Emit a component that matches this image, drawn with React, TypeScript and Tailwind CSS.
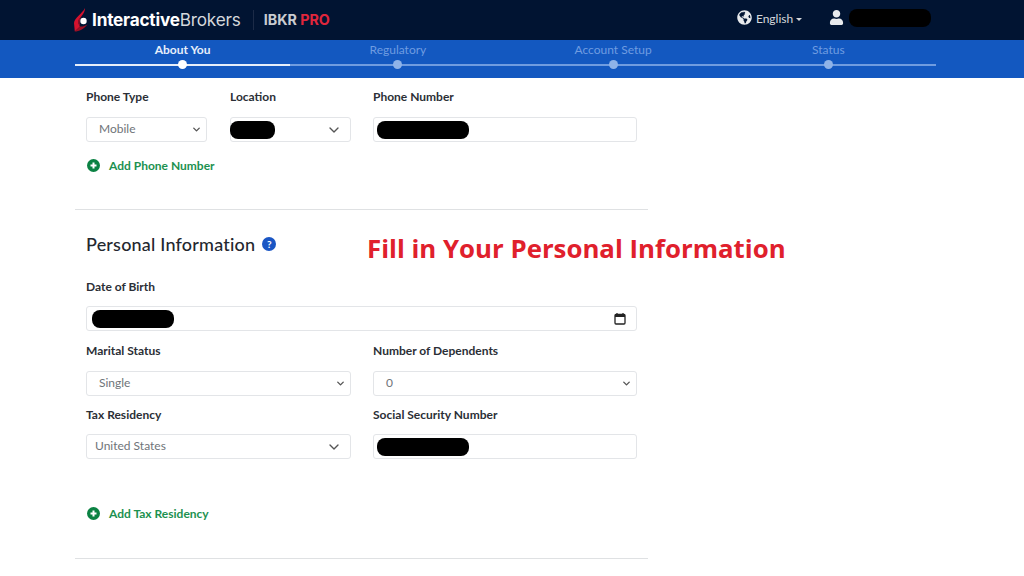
import { ChevronDown } from "lucide-react";
import { FaGlobeAmericas, FaUser } from "react-icons/fa";

const font = "font-['Lato','Liberation_Sans',sans-serif]";

const steps = ["About You", "Regulatory", "Account Setup", "Status"];

const Label = ({ children }: { children: string }) => (
  <p className="h-4 text-[12px] leading-4 font-bold text-[#2b2f36] whitespace-nowrap">{children}</p>
);

const SelectBox = ({ value, small }: { value?: string; small?: boolean }) => (
  <div className={`flex h-[25px] items-center justify-between rounded-[3px] border border-[#e3e5e8] bg-white ${small ? "pr-1" : "pr-[8px]"}`}>
    <span className={`-mt-px text-[12px] text-[#6f7479] ${small ? "pl-3" : "pl-2"}`}>{value}</span>
    <ChevronDown size={small ? 11 : 16} strokeWidth={small ? 3 : 2} className="text-[#555]" />
  </div>
);

const Redacted = ({ width }: { width: string }) => <div className={`h-[18px] rounded-[8px] bg-black ${width}`} />;

const AddLink = ({ children }: { children: string }) => (
  <div className="flex h-4 items-center gap-[9px]">
    <svg width="13" height="13" viewBox="0 0 13 13" className="ml-px -mt-[2px]">
      <circle cx="6.5" cy="6.5" r="6.5" fill="#0b8243" />
      <path d="M6.5 3.5v6M3.5 6.5h6" stroke="#fff" strokeWidth="2" />
    </svg>
    <span className="text-[12px] font-bold text-[#1c9150]">{children}</span>
  </div>
);

export default function App() {
  return (
    <div className={`relative h-[576px] w-[1024px] overflow-hidden bg-white ${font}`}>
      {/* top bar */}
      <div className="flex h-10 items-center bg-[#011432] pl-[74px]">
        <svg width="14" height="24" viewBox="0 0 14 24" className="-mt-[1px]">
          <path d="M11 0 C11 3 9.5 5.5 8 7.5 L4.5 12 C4 14 4.5 16.5 6 18.5 L0.8 23.5 L0 15 C0.5 9.5 8 6 11 0 Z" fill="#d5122e" />
          <path d="M6 18.5 L0.8 23.5 C5 23.5 10 21 13.5 16.5 C11 18 8.5 18.8 6 18.5 Z" fill="#9c1024" />
          <path d="M8 7.5 L4.5 12 C4 14 4.5 16.5 6 18.5 C5 14 6 10.5 8 7.5 Z" fill="#a80f26" />
          <circle cx="9.5" cy="13" r="3.2" fill="#fff" />
        </svg>
        <div className="ml-[4px] text-[17.2px] leading-none tracking-[-0.2px] whitespace-nowrap font-['Inter',sans-serif]">
          <span className="font-bold text-white">Interactive</span>
          <span className="text-[#d5d8dc]">Brokers</span>
        </div>
        <div className="ml-[12px] h-5 w-px bg-[#1c2b47]" />
        <div className="ml-[10px] text-[14.3px] font-bold whitespace-nowrap font-['Inter',sans-serif]">
          <span className="text-[#c9ccd1]">IBKR </span>
          <span className="text-[#e0263c]">PRO</span>
        </div>
        <div className="ml-[407px] flex items-center text-[#d5d8dc]">
          <FaGlobeAmericas size={15} className="-mt-[5px] text-[#e8eaed]" />
          <span className="ml-[4px] -mt-[2px] text-[12px]">English</span>
          <span className="ml-[3px] -mt-[2px] h-0 w-0 border-x-[3px] border-t-[3px] border-x-transparent border-t-[#d5d8dc]" />
          <FaUser size={15} className="ml-[27px] -mt-[5px] text-[#e8eaed]" />
          <div className="ml-[5px] -mt-[4px] h-[18px] w-[82px] rounded-[8px] bg-black" />
        </div>
      </div>

      {/* stepper */}
      <div className="h-[38px] bg-[#1358c0] pl-[75px] pr-[88px]">
        <div className="grid grid-cols-4">
          {steps.map((s, i) => (
            <div key={s} className="flex flex-col items-center">
              <span className={`mt-[3px] h-[14px] text-[12px] leading-[14px] whitespace-nowrap ${i === 0 ? "font-bold text-[#e6eefa]" : "text-[#6f9ce0]"}`}>
                {s}
              </span>
              <div className="relative mt-[3px] flex h-[9px] w-full items-center justify-center">
                <div className={`h-[2px] w-full ${i === 0 ? "bg-[#e6eefa]" : "bg-[#6f9ce0]"}`} />
                <div className={`absolute h-[9px] w-[9px] rounded-full ${i === 0 ? "bg-white" : "bg-[#8fb3e8]"}`} />
              </div>
            </div>
          ))}
        </div>
      </div>

      {/* form */}
      <div className="ml-[75px] w-[573px]">
        <div className="px-[11px] pt-[11px]">
          <div className="flex">
            <div className="w-[121px]">
              <Label>Phone Type</Label>
              <div className="mt-3"><SelectBox value="Mobile" small /></div>
            </div>
            <div className="ml-[23px] w-[121px]">
              <Label>Location</Label>
              <div className="mt-3 flex h-[25px] items-center justify-between rounded-[3px] border border-[#e3e5e8] pr-[8px]">
                <Redacted width="-ml-px w-[45px]" />
                <ChevronDown size={16} className="text-[#555]" />
              </div>
            </div>
            <div className="ml-[22px] w-[264px]">
              <Label>Phone Number</Label>
              <div className="mt-3 flex h-[25px] items-center rounded-[3px] border border-[#e3e5e8] pl-[3px]">
                <Redacted width="w-[92px]" />
              </div>
            </div>
          </div>
          <div className="mt-4"><AddLink>Add Phone Number</AddLink></div>
        </div>

        <div className="mt-[35px] h-px bg-[#dfe1e3]" />

        <div className="px-[11px]">
          <div className="mt-[22px] flex h-6 items-center gap-[7px]">
            <h2 className="text-[18px] font-medium tracking-[0.2px] text-[#23272e]">Personal Information</h2>
            <span className="flex h-[14px] w-[14px] items-center justify-center rounded-full bg-[#1a56c4] text-[10px] font-bold text-white">?</span>
          </div>

          <div className="mt-[23px]"><Label>Date of Birth</Label></div>
          <div className="mt-[11px] flex h-[25px] items-center justify-between rounded-[3px] border border-[#e3e5e8] pl-[5px] pr-[10px]">
            <Redacted width="w-[82px]" />
            <svg width="12" height="12" viewBox="0 0 12 12">
              <path d="M3 0v2M9 0v2" stroke="#222" strokeWidth="1.2" />
              <rect x="1" y="1.5" width="10" height="9.5" rx="1" fill="none" stroke="#222" strokeWidth="1.3" />
              <rect x="1" y="1.5" width="10" height="2.5" fill="#222" />
            </svg>
          </div>

          <div className="mt-3 grid grid-cols-[265px_264px] gap-x-[22px]">
            <Label>Marital Status</Label>
            <Label>Number of Dependents</Label>
            <div className="mt-3"><SelectBox value="Single" small /></div>
            <div className="mt-3"><SelectBox value="0" small /></div>
            <div className="mt-[11px]"><Label>Tax Residency</Label></div>
            <div className="mt-[11px]"><Label>Social Security Number</Label></div>
            <div className="mt-[11px]"><SelectBox value="United States" /></div>
            <div className="mt-[11px] flex h-[25px] items-center rounded-[3px] border border-[#e3e5e8] pl-[3px]">
              <Redacted width="w-[92px]" />
            </div>
          </div>

          <div className="mt-[47px]"><AddLink>Add Tax Residency</AddLink></div>
        </div>

        <div className="mt-9 h-px bg-[#dfe1e3]" />
      </div>

      {/* caption pasted over the screenshot */}
      <p className="absolute left-[367px] top-[231px] text-[25.8px] leading-[34px] font-bold whitespace-nowrap text-[#e0202c] font-['Open_Sans',sans-serif]">
        Fill in Your Personal Information
      </p>
    </div>
  );
}
